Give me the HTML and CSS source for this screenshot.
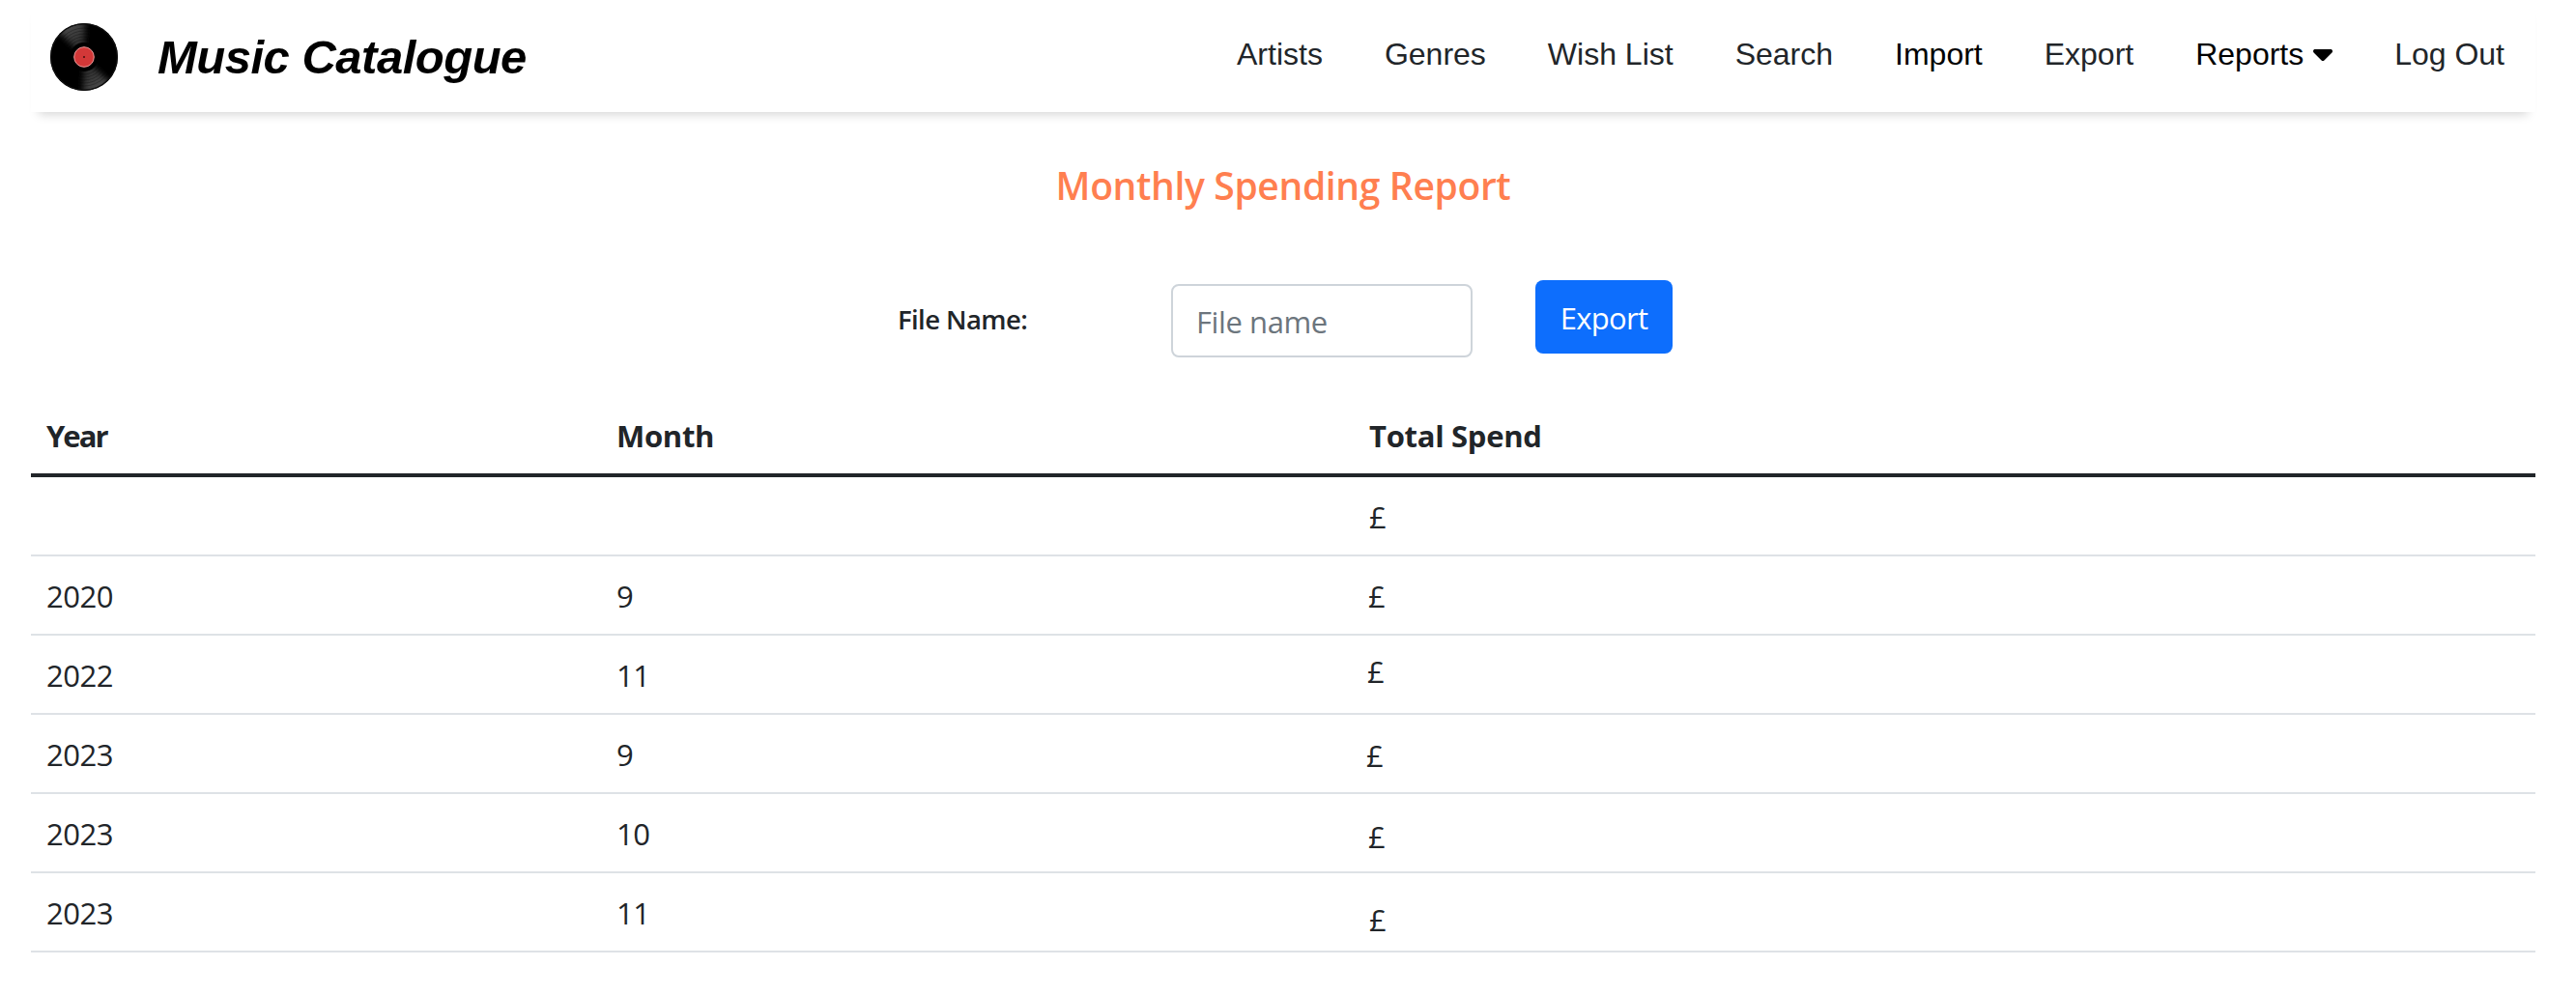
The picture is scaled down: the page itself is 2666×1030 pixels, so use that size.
FILE: index.html
```html
<!DOCTYPE html>
<html lang="en">
<head>
<meta charset="utf-8">
<title>Music Catalogue</title>
<link rel="stylesheet" href="styles.css">
</head>
<body>
<header class="header">
  <div class="brand">
    <svg class="logo" viewBox="0 0 70 70">
      <defs>
        <linearGradient id="sheen" x1="0.25" y1="0.03" x2="0.75" y2="0.97">
          <stop offset="0" stop-color="#4a4a4a"/>
          <stop offset="0.35" stop-color="#2c2c2c"/>
          <stop offset="0.65" stop-color="#2c2c2c"/>
          <stop offset="1" stop-color="#4a4a4a"/>
        </linearGradient>
        <filter id="soft" x="-20%" y="-20%" width="140%" height="140%"><feGaussianBlur stdDeviation="3"/></filter>
        <clipPath id="disc"><circle cx="35" cy="35" r="34"/></clipPath>
      </defs>
      <circle cx="35" cy="35" r="35" fill="#000"/>
      <g clip-path="url(#disc)">
        <path d="M35 35L6 6L18 -2L36 -2ZM35 35L64 64L52 72L34 72Z" fill="url(#sheen)" filter="url(#soft)"/>
      </g>
      <g fill="none" stroke="#000" stroke-opacity="0.35" stroke-width="0.8">
        <circle cx="35" cy="35" r="18"/><circle cx="35" cy="35" r="21"/><circle cx="35" cy="35" r="24"/>
        <circle cx="35" cy="35" r="27"/><circle cx="35" cy="35" r="30"/>
      </g>
      <circle cx="35" cy="35" r="34.3" fill="none" stroke="#111" stroke-width="1.2"/>
      <circle cx="35" cy="35" r="15" fill="#000"/>
      <circle cx="35" cy="35" r="10.3" fill="#d23838" stroke="#ef9a9a" stroke-width="1"/>
      <circle cx="35" cy="35" r="1" fill="#400c0c"/>
    </svg>
    <span class="brand-name">Music Catalogue</span>
  </div>
  <nav class="nav">
    <a>Artists</a>
    <a>Genres</a>
    <a>Wish List</a>
    <a>Search</a>
    <a class="dark">Import</a>
    <a>Export</a>
    <a class="dark">Reports <svg class="caret" viewBox="0 0 320 512"><path d="M137.400 374.600c12.500 12.500 32.800 12.500 45.300 0l128-128c9.200-9.200 11.900-22.900 6.900-34.900s-16.600-19.800-29.600-19.800L32 192c-12.900 0-24.600 7.800-29.600 19.800s-2.200 25.700 6.900 34.900l128 128z"/></svg></a>
    <a>Log Out</a>
  </nav>
</header>
<main>
  <h1 class="title">Monthly Spending Report</h1>
  <form class="export-form">
    <label class="label" for="file">File Name:</label>
    <input class="input" id="file" type="text" placeholder="File name">
    <button class="button" type="button">Export</button>
  </form>
  <table class="report">
    <colgroup><col class="col-year"><col class="col-month"><col></colgroup>
    <thead>
      <tr><th class="year-head">Year</th><th>Month</th><th>Total Spend</th></tr>
    </thead>
    <tbody>
      <tr><td></td><td></td><td>£</td></tr>
      <tr><td>2020</td><td>9</td><td class="spend-2">£</td></tr>
      <tr><td>2022</td><td>11</td><td class="spend-3">£</td></tr>
      <tr><td>2023</td><td>9</td><td class="spend-4">£</td></tr>
      <tr><td>2023</td><td>10</td><td class="spend-5">£</td></tr>
      <tr><td>2023</td><td>11</td><td class="spend-6">£</td></tr>
    </tbody>
  </table>
</main>
</body>
</html>
```
FILE: styles.css
```css
* { box-sizing: border-box; }
body {
  margin: 0;
  padding: 0 42px 0 32px;
  background: #fff;
  color: #212529;
  font-family: "Open Sans", "Noto Sans", sans-serif;
  font-size: 31px;
}
.header {
  display: flex;
  justify-content: space-between;
  height: 116px;
  padding: 0 32px 0 20px;
  font-family: "Liberation Sans", Arial, sans-serif;
  box-shadow: 0 10px 10px -8px rgba(0, 0, 0, 0.18);
}
.brand {
  display: flex;
  align-items: center;
  gap: 41px;
  height: 118px;
  color: #000;
}
.logo { width: 70px; height: 70px; }
.brand-name {
  font-size: 49px;
  font-weight: 700;
  font-style: italic;
  line-height: 56px;
  letter-spacing: -0.5px;
}
.nav {
  display: flex;
  gap: 64px;
  padding-top: 38px;
  font-size: 32px;
  line-height: 37px;
  white-space: nowrap;
}
.dark { color: #000; }
.caret { width: 20px; height: 32px; margin-left: 1px; vertical-align: -4px; }
.title {
  margin: 0;
  padding-top: 47px;
  color: #ff7f50;
  font-size: 39px;
  font-weight: 600;
  line-height: 58px;
  letter-spacing: -0.35px;
  text-align: center;
}
.export-form {
  display: flex;
  align-items: flex-start;
  height: 128px;
  margin-top: 69px;
  padding-left: 897px;
}
.label {
  width: 283px;
  padding-top: 21px;
  font-size: 27.5px;
  font-weight: 600;
  line-height: 40px;
  letter-spacing: -0.6px;
}
.input {
  width: 312px;
  height: 76px;
  margin: 4px 65px 0 0;
  padding: 2px 24px 0;
  border: 2px solid #ced4da;
  border-radius: 8px;
  font: inherit;
  letter-spacing: -0.4px;
}
.input::placeholder { color: #6c757d; opacity: 1; }
.button {
  width: 142px;
  height: 76px;
  padding: 2px 0 0;
  border: 0;
  border-radius: 8px;
  background: #0d6efd;
  color: #fff;
  font: inherit;
  letter-spacing: -0.7px;
}
.report {
  width: 2592px;
  border-collapse: separate;
  border-spacing: 0;
  table-layout: fixed;
}
.col-year { width: 590px; }
.col-month { width: 779px; }
.report th {
  height: 76px;
  padding: 9px 16px 0;
  border-bottom: 4px solid #212529;
  font-weight: 700;
  line-height: 48px;
  letter-spacing: -0.3px;
  text-align: left;
  vertical-align: top;
}
.report .year-head { letter-spacing: -2px; }
.report td {
  height: 82px;
  padding: 17px 16px 0;
  border-bottom: 2px solid #dee2e6;
  line-height: 48px;
  letter-spacing: -0.5px;
  vertical-align: top;
}
.report .spend-2 { padding: 17px 15px 0; }
.report .spend-3 { padding: 13px 14px 0; }
.report .spend-4 { padding: 18px 13px 0; }
.report .spend-5 { padding: 20px 15px 0; }
.report .spend-6 { padding: 24px 16px 0; }
```
